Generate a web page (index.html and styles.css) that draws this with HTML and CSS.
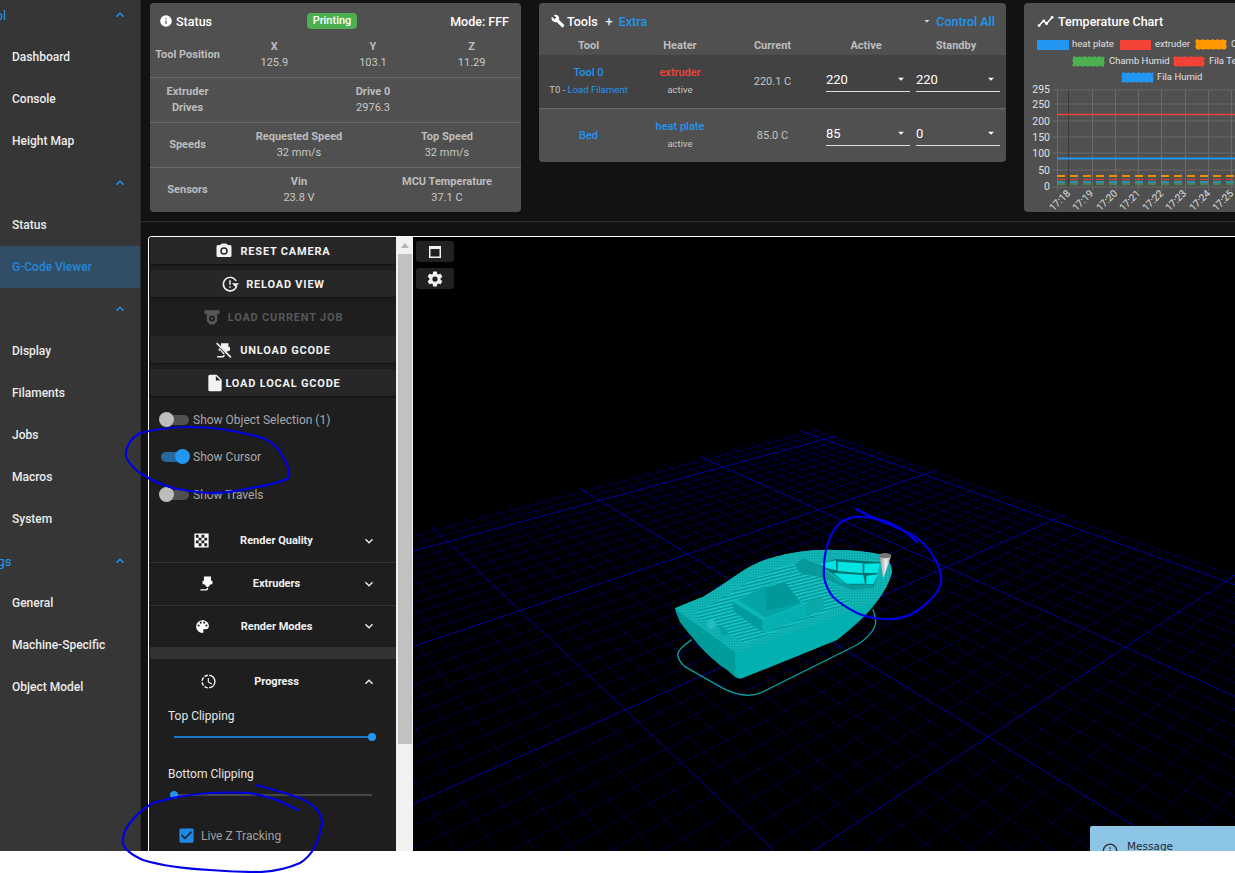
FILE: index.html
```html
<!DOCTYPE html>
<html lang="en">
<head>
<meta charset="utf-8">
<title>G-Code Viewer</title>
<link rel="stylesheet" href="styles.css">
</head>
<body>
<svg class="defs" width="0" height="0" aria-hidden="true">
  <symbol id="i-info" viewBox="0 0 24 24"><path d="M13,9H11V7H13M13,17H11V11H13M12,2A10,10 0 0,0 2,12A10,10 0 0,0 12,22A10,10 0 0,0 22,12A10,10 0 0,0 12,2Z"/></symbol>
  <symbol id="i-wrench" viewBox="0 0 24 24"><path d="M22.7,19L13.6,9.9C14.5,7.6 14,4.9 12.1,3C10.1,1 7.1,0.6 4.7,1.7L9,6L6,9L1.6,4.7C0.4,7.1 0.9,10.1 2.9,12.1C4.8,14 7.5,14.5 9.8,13.6L18.9,22.7C19.3,23.1 19.9,23.1 20.3,22.7L22.6,20.4C23.1,20 23.1,19.3 22.7,19Z"/></symbol>
  <symbol id="i-chart" viewBox="0 0 24 24"><path d="M3.5,18.5L9.5,12.5L13.5,16.5L22,6.92L20.59,5.5L13.5,13.5L9.5,9.5L2,17L3.5,18.5Z"/><circle cx="3" cy="17.8" r="2"/><circle cx="9.5" cy="11" r="2"/><circle cx="13.5" cy="15" r="2"/><circle cx="21.3" cy="6.2" r="2"/></symbol>
  <symbol id="i-camera" viewBox="0 0 24 24"><path d="M4,4H7L9,2H15L17,4H20A2,2 0 0,1 22,6V18A2,2 0 0,1 20,20H4A2,2 0 0,1 2,18V6A2,2 0 0,1 4,4M12,7A5,5 0 0,0 7,12A5,5 0 0,0 12,17A5,5 0 0,0 17,12A5,5 0 0,0 12,7M12,9A3,3 0 0,1 15,12A3,3 0 0,1 12,15A3,3 0 0,1 9,12A3,3 0 0,1 12,9Z"/></symbol>
  <symbol id="i-reload" viewBox="0 0 24 24"><path d="M12,4A8,8 0 0,1 18.9,8H21.2A10,10 0 1,0 22,14H20A8,8 0 1,1 12,4Z"/><path d="M24,11L19,16L14.5,11Z"/><path d="M11,7H13V13H11ZM11,15H13V17H11Z"/></symbol>
  <symbol id="i-nozzle-job" viewBox="0 0 24 24"><path d="M2,3H22V8H19V17L15,22H9L5,17V8H2Z M12,10A4,4 0 0,0 8,14A4,4 0 0,0 12,18A4,4 0 0,0 16,14A4,4 0 0,0 12,10Z"/><circle cx="12" cy="14" r="1.6"/></symbol>
  <symbol id="i-nozzle-off" viewBox="0 0 24 24"><path d="M1.5,3.5L3,2L22,21L20.5,22.5Z"/><path d="M8,3H18V8H20V13H17.5L15.8,15L8,7.2ZM6,9.5L13,16.5L12,17.5H11L7.5,13H5V9.5ZM3,20H10A1,1 0 0,0 11,19V18.5H13V19A3,3 0 0,1 10,22H3Z"/></symbol>
  <symbol id="i-file" viewBox="0 0 24 24"><path d="M13,9V3.5L18.5,9M6,2C4.89,2 4,2.89 4,4V20A2,2 0 0,0 6,22H18A2,2 0 0,0 20,20V8L14,2H6Z"/></symbol>
  <symbol id="i-checker" viewBox="0 0 24 24"><path d="M2 2V22H22V2H2M20 12H16V16H20V20H16V16H12V20H8V16H4V12H8V8H4V4H8V8H12V4H16V8H20V12M16 8V12H12V8H16M12 12V16H8V12H12Z"/></symbol>
  <symbol id="i-nozzle" viewBox="0 0 24 24"><path d="M7,2H17V8H19V13H16.5L13,17H11L7.5,13H5V8H7V2M10,22H2V20H10A1,1 0 0,0 11,19V18H13V19A3,3 0 0,1 10,22Z"/></symbol>
  <symbol id="i-palette" viewBox="0 0 24 24"><path d="M17.5,12A1.5,1.5 0 0,1 16,10.5A1.5,1.5 0 0,1 17.5,9A1.5,1.5 0 0,1 19,10.5A1.5,1.5 0 0,1 17.5,12M14.5,8A1.5,1.5 0 0,1 13,6.5A1.5,1.5 0 0,1 14.5,5A1.5,1.5 0 0,1 16,6.5A1.5,1.5 0 0,1 14.5,8M9.5,8A1.5,1.5 0 0,1 8,6.5A1.5,1.5 0 0,1 9.5,5A1.5,1.5 0 0,1 11,6.5A1.5,1.5 0 0,1 9.5,8M6.5,12A1.5,1.5 0 0,1 5,10.5A1.5,1.5 0 0,1 6.5,9A1.5,1.5 0 0,1 8,10.5A1.5,1.5 0 0,1 6.5,12M12,3A9,9 0 0,0 3,12A9,9 0 0,0 12,21A1.5,1.5 0 0,0 13.5,19.5C13.5,19.11 13.35,18.76 13.11,18.5C12.88,18.23 12.73,17.88 12.73,17.5A1.5,1.5 0 0,1 14.23,16H16A5,5 0 0,0 21,11C21,6.58 16.97,3 12,3Z"/></symbol>
  <symbol id="i-clock" viewBox="0 0 24 24"><path d="M13,2.05V4.07A8,8 0 0,1 20,12A8,8 0 0,1 13,19.93V21.95A10,10 0 0,0 22,12A10,10 0 0,0 13,2.05M11,2.05C9.05,2.25 7.2,3 5.68,4.26L7.1,5.74C8.23,4.84 9.57,4.26 11,4.06V2.05M4.26,5.68C3,7.2 2.25,9.04 2.05,11H4.05C4.24,9.58 4.8,8.23 5.69,7.1L4.26,5.68M2.05,13C2.25,14.96 3.03,16.8 4.27,18.32L5.69,16.9C4.81,15.77 4.25,14.42 4.06,13H2.05M7.1,18.37L5.68,19.74C7.2,21 9.05,21.79 11,22V20C9.58,19.82 8.23,19.25 7.1,18.37M12.5,7V12.25L17,14.92L16.25,16.15L11,13V7H12.5Z"/></symbol>
  <symbol id="i-cog" viewBox="0 0 24 24"><path d="M12,15.5A3.5,3.5 0 0,1 8.5,12A3.5,3.5 0 0,1 12,8.5A3.5,3.5 0 0,1 15.5,12A3.5,3.5 0 0,1 12,15.5M19.43,12.97C19.47,12.65 19.5,12.33 19.5,12C19.5,11.67 19.47,11.34 19.43,11L21.54,9.37C21.73,9.22 21.78,8.95 21.66,8.73L19.66,5.27C19.54,5.05 19.27,4.96 19.05,5.05L16.56,6.05C16.04,5.66 15.5,5.32 14.87,5.07L14.5,2.42C14.46,2.18 14.25,2 14,2H10C9.75,2 9.54,2.18 9.5,2.42L9.13,5.07C8.5,5.32 7.96,5.66 7.44,6.05L4.95,5.05C4.73,4.96 4.46,5.05 4.34,5.27L2.34,8.73C2.21,8.95 2.27,9.22 2.46,9.37L4.57,11C4.53,11.34 4.5,11.67 4.5,12C4.5,12.33 4.53,12.65 4.57,12.97L2.46,14.63C2.27,14.78 2.21,15.05 2.34,15.27L4.34,18.73C4.46,18.95 4.73,19.03 4.95,18.95L7.44,17.94C7.96,18.34 8.5,18.68 9.13,18.93L9.5,21.58C9.54,21.82 9.75,22 10,22H14C14.25,22 14.46,21.82 14.5,21.58L14.87,18.93C15.5,18.67 16.04,18.34 16.56,17.94L19.05,18.95C19.27,19.03 19.54,18.95 19.66,18.73L21.66,15.27C21.78,15.05 21.73,14.78 21.54,14.63L19.43,12.97Z"/></symbol>
  <symbol id="i-window" viewBox="0 0 24 24"><path d="M4,4H20V20H4V4M6,8V18H18V8H6Z"/></symbol>
  <symbol id="i-up" viewBox="0 0 24 24"><path d="M7.41,15.41L12,10.83L16.59,15.41L18,14L12,8L6,14L7.41,15.41Z"/></symbol>
  <symbol id="i-down" viewBox="0 0 24 24"><path d="M7.41,8.58L12,13.17L16.59,8.58L18,10L12,16L6,10L7.41,8.58Z"/></symbol>
  <symbol id="i-menu-down" viewBox="0 0 24 24"><path d="M7,10L12,15L17,10H7Z"/></symbol>
  <symbol id="i-checkbox" viewBox="0 0 24 24"><path d="M10,17L5,12L6.41,10.59L10,14.17L17.59,6.58L19,8M19,3H5C3.89,3 3,3.89 3,5V19A2,2 0 0,0 5,21H19A2,2 0 0,0 21,19V5C21,3.89 20.1,3 19,3Z"/></symbol>
  <symbol id="i-info-outline" viewBox="0 0 24 24"><path d="M11,9H13V7H11M12,20C7.59,20 4,16.41 4,12C4,7.59 7.59,4 12,4C16.41,4 20,7.59 20,12C20,16.41 16.41,20 12,20M12,2A10,10 0 0,0 2,12A10,10 0 0,0 12,22A10,10 0 0,0 22,12A10,10 0 0,0 12,2M11,17H13V11H11V17Z"/></symbol>
  <pattern id="stripes" width="14" height="10" patternUnits="userSpaceOnUse" patternTransform="rotate(-14)">
    <rect width="14" height="10" fill="#12c6c6"/><rect width="14" height="4" fill="#078e8e"/>
  </pattern>
  <pattern id="rim" width="8" height="8" patternUnits="userSpaceOnUse">
    <rect width="8" height="8" fill="#10b6b6"/><rect width="3" height="3" fill="#078c8c"/>
  </pattern>
  <linearGradient id="cone" x1="0" x2="1"><stop offset="0" stop-color="#8d8d8d"/><stop offset=".55" stop-color="#f0f0f0"/><stop offset="1" stop-color="#9a9a9a"/></linearGradient>
</svg>

<div class="app">
  <nav class="sidebar">
    <div class="nav-list">
      <div class="nav-group"><span class="nav-group-label">Control</span><svg class="nav-chev"><use href="#i-up"/></svg></div>
      <a class="nav-item">Dashboard</a>
      <a class="nav-item">Console</a>
      <a class="nav-item">Height Map</a>
      <div class="nav-group"><span class="nav-group-label">Job</span><svg class="nav-chev"><use href="#i-up"/></svg></div>
      <a class="nav-item">Status</a>
      <a class="nav-item nav-item-active">G-Code Viewer</a>
      <div class="nav-group"><span class="nav-group-label">Files</span><svg class="nav-chev"><use href="#i-up"/></svg></div>
      <a class="nav-item">Display</a>
      <a class="nav-item">Filaments</a>
      <a class="nav-item">Jobs</a>
      <a class="nav-item">Macros</a>
      <a class="nav-item">System</a>
      <div class="nav-group"><span class="nav-group-label">Settings</span><svg class="nav-chev"><use href="#i-up"/></svg></div>
      <a class="nav-item">General</a>
      <a class="nav-item">Machine-Specific</a>
      <a class="nav-item">Object Model</a>
    </div>
  </nav>

  <main class="main">
    <section class="top-row">
      <article class="card status-card">
        <header class="status-title">
          <span class="title-left status-name"><svg class="title-icon"><use href="#i-info"/></svg>Status</span>
          <span class="chip">Printing</span>
          <span class="mode">Mode: FFF</span>
        </header>
        <div class="srow srow-first">
          <div class="slabel">Tool Position</div>
          <div class="svals">
            <div class="sval"><b>X</b><span>125.9</span></div>
            <div class="sval"><b>Y</b><span>103.1</span></div>
            <div class="sval"><b>Z</b><span>11.29</span></div>
          </div>
        </div>
        <div class="srow">
          <div class="slabel">Extruder<br>Drives</div>
          <div class="svals"><div class="sval"><b>Drive 0</b><span>2976.3</span></div></div>
        </div>
        <div class="srow">
          <div class="slabel">Speeds</div>
          <div class="svals">
            <div class="sval"><b>Requested Speed</b><span>32 mm/s</span></div>
            <div class="sval"><b>Top Speed</b><span>32 mm/s</span></div>
          </div>
        </div>
        <div class="srow srow-last">
          <div class="slabel">Sensors</div>
          <div class="svals">
            <div class="sval"><b>Vin</b><span>23.8 V</span></div>
            <div class="sval"><b>MCU Temperature</b><span>37.1 C</span></div>
          </div>
        </div>
      </article>

      <article class="card tools-card">
        <header class="tools-title">
          <span class="title-left"><svg class="title-icon title-icon-tools"><use href="#i-wrench"/></svg>Tools<span class="plus">+</span><span class="blue">Extra</span></span>
          <span class="control-all"><svg class="menu-arrow-small"><use href="#i-menu-down"/></svg><span class="blue">Control All</span></span>
        </header>
        <div class="trow thead">
          <div>Tool</div><div>Heater</div><div>Current</div><div>Active</div><div>Standby</div>
        </div>
        <div class="trow tbody tbody-dark">
          <div class="tcell"><b class="blue">Tool 0</b><small>T0 - <span class="blue">Load Filament</span></small></div>
          <div class="tcell"><b class="red">extruder</b><small>active</small></div>
          <div class="tcell tcurrent">220.1 C</div>
          <div class="tcell"><div class="select select-active"><span>220</span><svg><use href="#i-menu-down"/></svg></div></div>
          <div class="tcell"><div class="select select-standby"><span>220</span><svg><use href="#i-menu-down"/></svg></div></div>
        </div>
        <div class="trow tbody">
          <div class="tcell"><b class="blue">Bed</b></div>
          <div class="tcell"><b class="blue">heat plate</b><small>active</small></div>
          <div class="tcell tcurrent">85.0 C</div>
          <div class="tcell"><div class="select select-active"><span>85</span><svg><use href="#i-menu-down"/></svg></div></div>
          <div class="tcell"><div class="select select-standby"><span>0</span><svg><use href="#i-menu-down"/></svg></div></div>
        </div>
      </article>

      <article class="card chart-card">
        <header class="chart-title"><svg class="title-icon title-icon-chart"><use href="#i-chart"/></svg>Temperature Chart</header>
        <svg class="chart" viewBox="1024 32 400 180">
          <g class="legend">
            <rect x="1037" y="40" width="32" height="10" fill="#2196f3"/><text x="1072" y="47">heat plate</text>
            <rect x="1120" y="40" width="31" height="10" fill="#f44336"/><text x="1155" y="47">extruder</text>
            <rect class="dashed" x="1196" y="40" width="30" height="9" fill="#ff9800" stroke="#ff9800"/><text x="1231" y="47">Chamb Temp</text>
            <rect class="dashed" x="1073" y="57" width="31" height="9" fill="#4caf50" stroke="#4caf50"/><text x="1109" y="64">Chamb Humid</text>
            <rect class="dashed" x="1174" y="57" width="30" height="9" fill="#f44336" stroke="#f44336"/><text x="1209" y="64">Fila Temp</text>
            <rect class="dashed" x="1122" y="73" width="31" height="9" fill="#2196f3" stroke="#2196f3"/><text x="1157" y="80">Fila Humid</text>
          </g>
          <g class="gridlines">
            <path d="M1053 90H1240M1053 104H1240M1053 121H1240M1053 137H1240M1053 153H1240M1053 170H1240M1053 187H1240"/>
            <path d="M1057.5 90V191M1092.5 90V191M1115.5 90V191M1138.5 90V191M1161.5 90V191M1185.5 90V191M1208.5 90V191M1231.5 90V191"/>
          </g>
          <path class="cursor-line" d="M1068.5 90V187"/>
          <g class="yaxis">
            <text x="1050" y="93">295</text><text x="1050" y="108">250</text><text x="1050" y="125">200</text><text x="1050" y="141">150</text><text x="1050" y="157">100</text><text x="1050" y="174">50</text><text x="1050" y="190">0</text>
          </g>
          <path class="series series-red" stroke="#f44336" d="M1057 114.5H1240"/>
          <path class="series" stroke="#2196f3" d="M1057 158.5H1240"/>
          <path class="series series-dash" stroke="#ef8f00" d="M1057 176H1240"/>
          <path class="series series-dash series-thin" stroke="#e53935" d="M1057 179.5H1240"/>
          <path class="series series-dash series-thin" stroke="#4caf50" d="M1057 184H1240"/>
          <path class="series series-dash" stroke="#2a8fa8" d="M1057 182H1240"/>
          <g class="xaxis">
            <text transform="translate(1071 194) rotate(-45)">17:18</text>
            <text transform="translate(1094 194) rotate(-45)">17:19</text>
            <text transform="translate(1118 194) rotate(-45)">17:20</text>
            <text transform="translate(1141 194) rotate(-45)">17:21</text>
            <text transform="translate(1164 194) rotate(-45)">17:22</text>
            <text transform="translate(1187 194) rotate(-45)">17:23</text>
            <text transform="translate(1211 194) rotate(-45)">17:24</text>
            <text transform="translate(1234 194) rotate(-45)">17:25</text>
          </g>
        </svg>
      </article>
    </section>

    <section class="viewer">
      <aside class="panel">
        <button class="btn"><svg class="btn-icon"><use href="#i-camera"/></svg>Reset Camera</button>
        <button class="btn"><svg class="btn-icon"><use href="#i-reload"/></svg>Reload View</button>
        <button class="btn btn-disabled"><svg class="btn-icon"><use href="#i-nozzle-job"/></svg>Load Current Job</button>
        <button class="btn"><svg class="btn-icon"><use href="#i-nozzle-off"/></svg>Unload GCode</button>
        <button class="btn btn-tight"><svg class="btn-icon btn-icon-file"><use href="#i-file"/></svg>Load Local GCode</button>

        <div class="toggles">
          <label class="toggle"><span class="track"><span class="thumb"></span></span>Show Object Selection (1)</label>
          <label class="toggle toggle-on"><span class="track"><span class="thumb"></span></span>Show Cursor</label>
          <label class="toggle"><span class="track"><span class="thumb"></span></span>Show Travels</label>
        </div>

        <div class="exp-head"><span class="exp-icon"><svg><use href="#i-checker"/></svg></span><span>Render Quality</span><span class="exp-chev"><svg><use href="#i-down"/></svg></span></div>
        <div class="exp-head"><span class="exp-icon exp-icon-wide"><svg><use href="#i-nozzle"/></svg></span><span>Extruders</span><span class="exp-chev"><svg><use href="#i-down"/></svg></span></div>
        <div class="exp-head exp-head-last"><span class="exp-icon"><svg><use href="#i-palette"/></svg></span><span>Render Modes</span><span class="exp-chev"><svg><use href="#i-down"/></svg></span></div>
        <div class="exp-gap"></div>
        <div class="exp-head exp-head-open"><span class="exp-icon exp-icon-wide"><svg><use href="#i-clock"/></svg></span><span>Progress</span><span class="exp-chev"><svg><use href="#i-up"/></svg></span></div>
        <div class="progress">
          <div class="slider-label">Top Clipping</div>
          <div class="slider"><span class="slider-fill"></span><span class="slider-thumb slider-thumb-end"></span></div>
          <div class="slider-label">Bottom Clipping</div>
          <div class="slider"><span class="slider-thumb"></span></div>
          <label class="check"><svg><use href="#i-checkbox"/></svg>Live Z Tracking</label>
        </div>
      </aside>

      <div class="scrollbar"><span class="scroll-arrow"></span><span class="scroll-thumb"></span></div>

      <div class="canvas">
        <svg class="scene" viewBox="413 237 822 614" preserveAspectRatio="none">
          <path id="grid-minor" class="grid-minor"/>
          <path id="grid-major" class="grid-major"/>
          <g transform="translate(670 545) scale(.33333)">
            <path class="skirt" d="M65,284 Q22,315 23,330 Q28,352 45,365 L155,428 Q225,465 275,442 L560,300 Q615,265 617,230 Q615,205 608,193"/>
            <path fill="#00a6a6" d="M15,190 Q60,170 100,155 Q150,125 200,90 Q250,55 300,40 Q345,25 390,20 Q445,12 500,15 Q570,15 640,30 Q668,55 665,85 Q655,125 620,170 Q590,215 500,285 L215,400 Q205,402 195,395 Q175,375 150,360 Q100,320 70,280 Q40,245 30,230 Z"/>
            <path fill="#009c9c" d="M15,195 L195,320 L195,395 Q175,375 150,360 Q100,320 70,280 Q40,245 30,230 Z"/>
            <path fill="#02b0b0" d="M195,320 L620,165 Q590,215 500,285 L215,400 Q205,402 198,395 Z"/>
            <path fill="url(#rim)" d="M15,190 Q60,170 100,155 Q150,125 200,90 Q250,55 300,40 Q345,25 390,20 Q445,12 500,15 Q570,15 640,30 Q668,55 665,85 Q655,125 620,170 L205,322 L190,318 Z"/>
            <path fill="url(#stripes)" d="M70,208 Q130,175 190,140 Q245,100 300,80 Q340,62 375,55 L395,85 L455,98 L510,150 L545,172 L225,295 Z"/>
            <path fill="#069a9a" d="M375,58 L400,40 L445,60 L510,112 L590,122 L625,95 L610,128 L545,135 L460,98 L392,85 Z"/>
            <path fill="#046f6f" d="M443,58 L498,42 L632,52 L612,120 L532,118 L488,86 Z"/>
            <path fill="#00e4e4" d="M445,57 L498,46 L498,76 L472,70 Z M503,50 L578,55 L578,85 L503,78 Z M583,56 L630,55 L624,84 L583,84 Z M490,84 L580,90 L585,116 L530,116 Z M589,92 L625,88 L610,118 L589,118 Z"/>
            <path fill="#0bb6b6" d="M188,170 L315,108 L410,178 L285,230 Z"/>
            <path fill="#05a4a4" d="M206,166 L285,122 L395,176 L287,218 Z"/>
            <path fill="#009898" d="M285,128 L345,112 L392,172 L290,198 Z"/>
            <path fill="#009c9c" d="M188,170 L278,226 L278,262 L188,196 Z"/>
            <path fill="#06b0b0" d="M278,226 L410,176 L410,214 L292,262 L278,262 Z"/>
            <path fill="#0ba8a8" d="M410,170 L460,160 L460,195 L410,215 Z"/>
            <circle cx="125" cy="238" r="13" fill="#27bcbc"/>
            <path fill="#07a0a0" d="M145,240 L165,248 L178,268 L155,272 Z"/>
            <path fill="url(#cone)" d="M628,32 L664,32 L640,100 Z"/>
            <ellipse cx="645" cy="32" rx="19" ry="8" fill="#767676"/>
          </g>
        </svg>
        <div class="canvas-tools">
          <button class="tool-btn"><svg><use href="#i-window"/></svg></button>
          <button class="tool-btn"><svg><use href="#i-cog"/></svg></button>
        </div>
        <div class="toast"><svg><use href="#i-info-outline"/></svg><span>Message</span></div>
      </div>
    </section>
  </main>
</div>

<svg class="scribbles" viewBox="0 0 1235 873">
  <path d="M140,433 Q165,427 190,427 Q225,427 263,438 Q278,445 283,457 Q290,468 289,477 Q285,482 257,487 Q225,494 207,493 Q190,492 173,488 Q155,483 140,473 Q124,460 126,452 Q128,440 140,433"/>
  <path d="M256,785 Q275,790 297,797 Q312,803 317,810 Q322,815 322,823 Q320,838 313,850 Q308,858 300,863 Q282,871 260,872 Q235,872 210,870 Q170,868 143,860 Q125,852 123,843 Q122,833 130,823 Q140,810 153,803 Q180,795 210,793 Q232,792 250,793 Q265,796 277,800 Q290,806 298,810"/>
  <path d="M856,509 Q868,516 883,522 Q900,528 917,538 Q930,548 937,563 Q942,573 941,583 Q938,593 930,600 Q920,610 910,615 Q897,620 883,619 Q868,618 857,613 Q843,606 833,597 Q826,588 824,577 Q823,558 828,543 Q832,530 840,523 Q850,516 863,517 Q877,518 890,523 Q905,530 917,542"/>
</svg>
<script src="script.js"></script>
</body>
</html>
```
FILE: styles.css
```css
* { box-sizing: border-box; }
html, body { margin: 0; height: 873px; overflow: hidden; background: #fff; }
body { position: relative; font-family: Roboto, "Liberation Sans", sans-serif; color: #fff; }
.defs { position: absolute; }

.app { display: flex; height: 851px; overflow: hidden; background: #121212; }

/* sidebar */
.sidebar { flex: none; width: 141px; background: #363636; border-right: 1px solid #2a2a2a; overflow: hidden; }
.nav-list { margin-top: -6px; display: flex; flex-direction: column; }
.nav-item, .nav-group { display: flex; align-items: center; height: 42px; font-size: 12px; font-weight: 500; white-space: nowrap; }
.nav-item { padding-left: 12px; color: #ececec; }
.nav-item-active { background: #324e66; color: #2387d8; }
.nav-group { justify-content: space-between; color: #2196f3; }
.nav-group-label { margin-left: -36px; font-size: 13px; font-weight: 400; }
.nav-chev { width: 16px; height: 16px; margin-right: 12px; fill: #2196f3; }

/* main */
.main { flex: 1; min-width: 0; display: flex; flex-direction: column; overflow: hidden; }
.top-row { flex: none; display: flex; align-items: flex-start; gap: 18px; height: 222px; padding: 3px 0 0 9px; border-bottom: 1px solid #2e2e2e; }
.card { flex: none; background: #505050; border-radius: 4px; overflow: hidden; }
.blue { color: #2196f3; }
.red { color: #f44336; }
.title-left { display: flex; align-items: center; font-size: 12.5px; font-weight: 500; }
.title-icon { width: 14px; height: 14px; margin-right: 3px; fill: #fff; }
.title-icon-tools { margin-right: 2px; }

/* status */
.status-card { width: 371px; height: 209px; }
.status-title { display: grid; grid-template-columns: 1fr auto 1fr; align-items: center; height: 29px; padding: 7px 12px 0 5px; }
.status-name { margin-left: 4px; }
.chip { padding: 0 6px; height: 16px; line-height: 16px; border-radius: 4px; background: #4caf50; font-size: 11px; font-weight: 500; }
.mode { justify-self: end; font-size: 12.5px; font-weight: 500; }
.srow { display: grid; grid-template-columns: 75px 1fr; height: 45px; border-bottom: 1px solid #696969; padding-bottom: 1px; }
.srow-first { height: 46px; padding-bottom: 0; }
.srow-last { height: 44px; border-bottom: 0; }
.slabel { align-self: center; text-align: center; font-size: 11px; font-weight: 700; line-height: 16px; color: #bdbdbd; }
.svals { display: grid; grid-auto-flow: column; grid-auto-columns: 1fr; align-items: center; }
.sval { display: flex; flex-direction: column; align-items: center; font-size: 11px; line-height: 16px; color: #c8c8c8; }
.sval b { color: #bdbdbd; }

/* tools */
.tools-card { width: 467px; height: 159px; }
.tools-title { display: flex; justify-content: space-between; align-items: center; height: 32px; padding: 4px 11px 0 12px; }
.plus { margin: 0 6px 0 8px; font-weight: 400; }
.control-all { display: flex; align-items: center; font-size: 12.5px; font-weight: 500; }
.menu-arrow-small { width: 12px; height: 12px; margin-right: 3px; fill: #ddd; }
.trow { display: grid; grid-template-columns: 95px 92px 93px 94px 93px; }
.trow > :first-child { padding-left: 4px; }
.thead { height: 20px; align-items: center; text-align: center; font-size: 11px; font-weight: 700; color: #bdbdbd; }
.thead > :last-child { padding-right: 7px; }
.tbody { height: 53px; }
.tbody-dark { height: 54px; background: #424242; border-bottom: 1px solid #696969; }
.tcell { display: flex; flex-direction: column; justify-content: center; align-items: center; font-size: 11px; line-height: 17px; min-width: 0; white-space: nowrap; }
.tcell b { font-weight: 500; }
.tcell small { margin-bottom: 2px; font-size: 9.5px; color: #c4c4c4; }
.tcurrent { color: #c4c4c4; }
.select { align-self: stretch; display: flex; justify-content: space-between; align-items: center; height: 24px; margin-bottom: 4px; padding: 0 2px 0 0; font-size: 13px; color: #fff; border-bottom: 1px solid #dcdcdc; }
.select-active { margin-left: 7px; margin-right: 3px; }
.select-standby { margin-left: 3px; margin-right: 6px; }
.select svg { width: 14px; height: 14px; fill: #fff; }

/* chart */
.chart-card { width: 400px; height: 209px; }
.chart-title { display: flex; align-items: center; height: 29px; padding: 7px 0 0 13px; font-size: 12.5px; font-weight: 500; }
.title-icon-chart { width: 17px; height: 17px; margin-right: 4px; }
.chart { display: block; width: 400px; height: 180px; }
.legend text { font-family: Roboto, sans-serif; font-size: 9.5px; fill: #e0e0e0; }
.dashed { stroke-width: 1; stroke-dasharray: 3 2; }
.gridlines path { fill: none; stroke: #696969; stroke-width: 1; }
.cursor-line { fill: none; stroke: #3a3a3a; stroke-width: 1; }
.yaxis text { font-family: Roboto, sans-serif; font-size: 10.5px; fill: #e0e0e0; text-anchor: end; }
.xaxis text { font-family: Roboto, sans-serif; font-size: 10px; fill: #e0e0e0; text-anchor: end; }
.series { fill: none; stroke-width: 2; }
.series-red { stroke-width: 1.6; }
.series-dash { stroke-dasharray: 8 5; }
.series-thin { stroke-width: 1.2; }

/* viewer */
.viewer { flex: 1; min-height: 0; display: flex; margin: 14px 0 0 7px; border-top: 1px solid #fff; border-left: 1px solid #fff; border-top-left-radius: 4px; overflow: hidden; }
.panel { flex: none; width: 247px; padding-left: 1px; background: #1e1e1e; overflow: hidden; }
.btn { display: flex; justify-content: center; align-items: center; gap: 7px; width: 100%; height: 27px; margin: 0 0 6px; padding: 2px 0 0; border: 0; border-radius: 3px; background: #272727; box-shadow: 0 1px 2px rgba(0,0,0,.5); color: #f2f2f2; font: 700 11px Roboto, sans-serif; letter-spacing: .8px; text-transform: uppercase; }
.btn-icon { width: 18px; height: 18px; margin-top: -2px; fill: currentColor; }
.btn-disabled { background: transparent; box-shadow: none; color: #575757; }
.btn-tight { gap: 0; }
.btn-icon-file { width: 20px; height: 20px; }

.toggles { display: flex; flex-direction: column; padding: 0 0 6px; margin-top: -1px; }
.toggle { display: flex; align-items: center; gap: 4px; height: 37.5px; padding-left: 11px; font-size: 12px; color: #a8a8a8; }
.track { position: relative; width: 28px; height: 10px; border-radius: 5px; background: #505050; }
.thumb { position: absolute; left: -2px; top: -3px; width: 15px; height: 15px; border-radius: 50%; background: #bdbdbd; }
.toggle-on .track { background: #27679c; }
.toggle-on .thumb { left: 14px; background: #2196f3; }

.exp-head { display: grid; grid-template-columns: 1fr auto 1fr; align-items: center; height: 43px; padding-left: 7px; border-bottom: 1px solid #353535; font-size: 11px; font-weight: 700; color: #f2f2f2; }
.exp-head-last { height: 41px; border-bottom: 0; box-shadow: 0 1px 2px rgba(0,0,0,.4); }
.exp-head-open { height: 46px; border-bottom: 0; }
.exp-icon { justify-self: end; display: flex; margin-right: 30px; }
.exp-icon-wide { margin-right: 37px; }
.exp-icon svg { width: 17px; height: 17px; fill: #fff; }
.exp-chev { justify-self: end; display: flex; margin-right: 19px; }
.exp-chev svg { width: 16px; height: 16px; fill: #eee; }
.exp-gap { height: 12px; background: #333; }

.progress { padding: 3px 0 0 18px; }
.slider-label { height: 16px; line-height: 16px; font-size: 12px; color: #e6e6e6; }
.slider { position: relative; width: 198px; height: 2px; margin: 12px 0 28px 6px; background: #474747; }
.slider-fill { display: block; height: 2px; background: #1b78c8; }
.slider-thumb { position: absolute; left: -4px; top: -3px; width: 8px; height: 8px; border-radius: 50%; background: #2196f3; }
.slider-thumb-end { left: auto; right: -4px; }
.check { display: flex; align-items: center; gap: 5.5px; height: 18px; margin: 31px 0 0 8.5px; font-size: 12px; color: #a0a0a0; }
.check svg { width: 19px; height: 19px; fill: #1e88e5; }

.scrollbar { flex: none; display: flex; flex-direction: column; align-items: center; width: 17px; background: #f1f1f1; }
.scroll-arrow { width: 0; height: 0; margin: 6px 0 6px; border: 4px solid transparent; border-top: 0; border-bottom: 5px solid #b5b5b5; }
.scroll-thumb { width: 14px; height: 490px; background: #c1c1c1; }

.canvas { position: relative; flex: 1; min-width: 0; background: #000; overflow: hidden; }
.scene { display: block; width: 100%; height: 100%; }
.grid-minor { fill: none; stroke: #00006e; stroke-width: .6; }
.grid-major { fill: none; stroke: #0000c8; stroke-width: .8; }
.skirt { fill: none; stroke: #0b9c9c; stroke-width: 4; }
.canvas-tools { position: absolute; left: 3px; top: 4px; display: flex; flex-direction: column; gap: 6px; }
.tool-btn { display: flex; justify-content: center; align-items: center; width: 38px; height: 21px; padding: 0; border: 0; border-radius: 3px; background: #212121; }
.tool-btn svg { width: 18px; height: 18px; fill: #f2f2f2; }
.toast { position: absolute; right: 0; bottom: 0; display: flex; align-items: flex-start; width: 145px; height: 25px; padding: 14px 0 0 11px; background: #8dc5e6; border-top-left-radius: 2px; overflow: hidden; color: #1e2a33; font: 400 10.5px "DejaVu Sans", sans-serif; }
.toast svg { flex: none; width: 18px; height: 18px; margin: 2px 8px 0 0; fill: #333; }

.scribbles { position: absolute; left: 0; top: 0; width: 1235px; height: 873px; pointer-events: none; }
.scribbles path { fill: none; stroke: #0000e6; stroke-width: 2.2; stroke-linecap: round; stroke-linejoin: round; }
```
FILE: script.js
```js
// Draws the perspective floor grid of the G-code viewer from its two vanishing points.
(function () {
  var VA = [49, 165], VB = [1882, 152], C = [811, 428];

  function edge(V, t) {
    return [V[0] + (C[0] - V[0]) / t, V[1] + (C[1] - V[1]) / t];
  }
  function line(start, V) {
    var k = 8;
    return 'M' + start[0].toFixed(1) + ' ' + start[1].toFixed(1) +
      'L' + (start[0] + (start[0] - V[0]) * k).toFixed(1) + ' ' + (start[1] + (start[1] - V[1]) * k).toFixed(1);
  }
  function isMajor(n) {
    return ((n % 10) + 10) % 10 === 0;
  }

  var minor = '', major = '', n, s, d;
  for (n = -1; (s = 0.99 - 0.0084 * n) > 0.03; n++) {
    d = line(edge(VB, s), VA);
    if (isMajor(n)) { major += d; } else { minor += d; }
  }
  for (n = -2; (s = 0.969 - 0.0109 * n) > 0.08; n++) {
    d = line(edge(VA, s), VB);
    if (isMajor(n)) { major += d; } else { minor += d; }
  }
  document.getElementById('grid-minor').setAttribute('d', minor);
  document.getElementById('grid-major').setAttribute('d', major);
})();
```
